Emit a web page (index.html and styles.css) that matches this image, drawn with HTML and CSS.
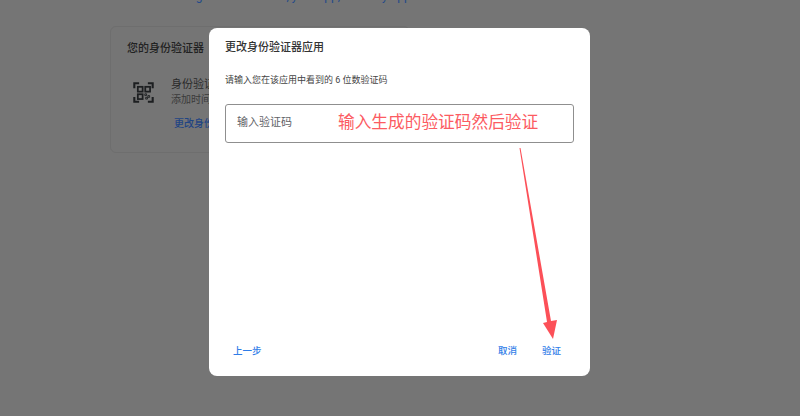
FILE: index.html
```html
<!DOCTYPE html>
<html>

<head>
    <meta charset="utf-8" />
    <title>更改身份验证器应用</title>
    <link rel="stylesheet" href="styles.css">
</head>

<body>
    <div class="page">
        <p class="top-text">Google Authenticator, your app, or Authy app</p>
        <section class="auth-card">
            <h2 class="card-title">您的身份验证器</h2>
            <div class="card-row">
                <svg class="qr-icon" width="21" height="21" viewBox="0 0 24 24" fill="none" stroke="#1d1f21" stroke-width="2">
                    <path d="M1.500 7V1.500H7M17 1.500h5.500V7M22.500 17v5.500H17M7 22.500H1.500V17" stroke-width="2.400" />
                    <rect x="5.500" y="5.500" width="5.500" height="5.500" />
                    <rect x="14" y="5.500" width="5.500" height="5.500" />
                    <rect x="5.500" y="14" width="5.500" height="5.500" />
                    <path d="M13.500 13.500h2v2h-2zM17 15.500h2v2h-2zM14.500 17.500h2v2h-2z" stroke-width="1" />
                </svg>
                <div class="card-info">
                    <div class="card-name">身份验证器</div>
                    <div class="card-sub">添加时间：刚刚</div>
                </div>
            </div>
            <a class="card-link">更改身份验证器应用</a>
        </section>
    </div>

    <div class="dialog">
        <h1 class="dialog-title">更改身份验证器应用</h1>
        <p class="dialog-desc">请输入您在该应用中看到的 6 位数验证码</p>
        <div class="code-input">输入验证码</div>
        <div class="dialog-actions">
            <a class="action">上一步</a>
            <div class="actions-right">
                <a class="action">取消</a>
                <a class="action">验证</a>
            </div>
        </div>
    </div>

    <div class="note">输入生成的验证码然后验证</div>
    <svg class="arrow" width="800" height="416" viewBox="0 0 800 416">
        <polygon points="519.500,148 520.500,148 551,321 557,320 553,339 543,323 547,322" fill="#fc5058" />
    </svg>
</body>

</html>
```

FILE: styles.css
```css
html,
body {
    margin: 0;
    height: 100%;
    overflow: hidden;
}

body {
    background-color: #757575;
    font-family: "Roboto", "Noto Sans CJK SC", sans-serif;
    color: #2b2b2b;
}

.page {
    height: 416px;
    padding-left: 110px;
}

.top-text {
    margin: -11px 0 0 64px;
    height: 37px;
    font-size: 12px;
    line-height: 14px;
    color: #234a8a;
    white-space: nowrap;
}

.auth-card {
    box-sizing: border-box;
    width: 300px;
    height: 127px;
    padding: 15px 16px;
    border: 1px solid #6e6e6e;
    border-radius: 6px;
}

.card-title {
    margin: 0;
    font-size: 11px;
    line-height: 14px;
    font-weight: 500;
    color: #222;
}

.card-row {
    display: flex;
    gap: 17px;
    margin: 21px 0 0 6px;
    align-items: center;
}

.card-info {
    font-size: 10px;
    line-height: 15px;
}

.card-name {
    color: #2a2a2a;
    font-size: 11px;
}

.card-sub {
    color: #3a3a3a;
}

.card-link {
    display: block;
    margin: 10px 0 0 47px;
    font-size: 10px;
    line-height: 14px;
    font-weight: 500;
    color: #1f4484;
}

.dialog {
    position: absolute;
    left: 209px;
    top: 28px;
    box-sizing: border-box;
    width: 381px;
    height: 348px;
    padding: 13px 16px 18px;
    display: flex;
    flex-direction: column;
    background-color: #fff;
    border-radius: 8px;
}

.dialog-title {
    margin: 0;
    font-size: 11px;
    line-height: 14px;
    font-weight: 500;
    color: #333;
}

.dialog-desc {
    margin: 18px 0 0;
    font-size: 9px;
    line-height: 14px;
    color: #444;
}

.code-input {
    box-sizing: border-box;
    height: 39px;
    margin-top: 17px;
    padding: 0 11px;
    border: 1px solid #8f8f8f;
    border-radius: 3px;
    font-size: 11px;
    line-height: 35px;
    color: #5f6368;
}

.dialog-actions {
    display: flex;
    justify-content: space-between;
    align-items: center;
    margin-top: auto;
    padding: 0 13px 0 8px;
}

.actions-right {
    display: flex;
    gap: 25px;
}

.action {
    font-size: 9.500px;
    line-height: 14px;
    font-weight: 500;
    color: #2f7de8;
}

.note {
    position: absolute;
    left: 338px;
    top: 110px;
    font-size: 16.700px;
    line-height: 25px;
    color: #fc5b62;
    white-space: nowrap;
}

.arrow {
    position: absolute;
    left: 0;
    top: 0;
}
```
